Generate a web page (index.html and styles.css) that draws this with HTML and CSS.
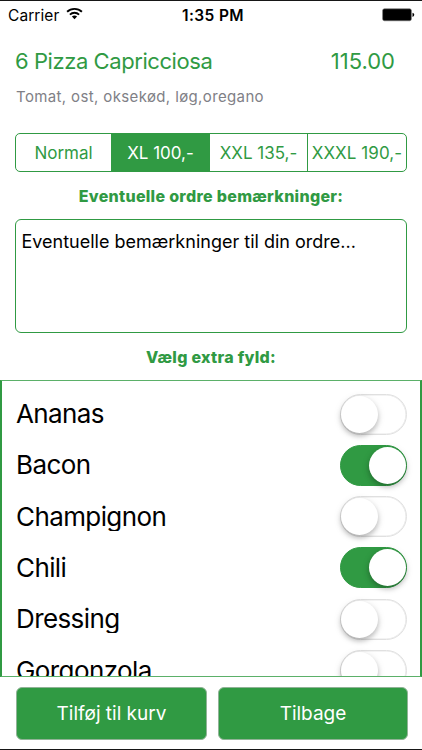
FILE: index.html
```html
<!DOCTYPE html>
<html lang="da">
<head>
<meta charset="utf-8">
<title>Pizza Capricciosa</title>
<link rel="stylesheet" href="styles.css">
</head>
<body>
<div class="screen">
  <header class="status">
    <div class="carrier"><span>Carrier</span>
      <svg class="wifi" width="17" height="13" viewBox="0 0 17 13" fill="none" stroke="#000" stroke-width="1.9"><path d="M1.1 4.8C5.2.9 11.8.9 15.9 4.8M3.9 7.6C6.5 5.2 10.5 5.2 13.1 7.6"/><path d="M5.9 9.6Q8.5 7.4 11.1 9.6L8.5 12.2Z" fill="#000" stroke="none"/></svg>
    </div>
    <span class="time">1:35 PM</span>
    <svg class="battery" width="33" height="14" viewBox="0 0 33 14"><rect x=".6" y=".8" width="28.8" height="12" rx="1.8" stroke="#777" stroke-width=".6"/><path d="M30.5 4.7Q32.3 5.2 32.3 6.8T30.5 8.9Z"/></svg>
  </header>
  <div class="heading"><h1>6 Pizza Capricciosa</h1><span class="price">115.00</span></div>
  <p class="ingredients">Tomat, ost, oksekød, løg,oregano</p>
  <div class="segments">
    <span class="segment">Normal</span><span class="segment selected">XL 100,-</span><span class="segment">XXL 135,-</span><span class="segment divided">XXXL 190,-</span>
  </div>
  <h2 class="label">Eventuelle ordre bemærkninger:</h2>
  <div class="remarks"><span>Eventuelle bemærkninger til din ordre...</span></div>
  <h2 class="label extras">Vælg extra fyld:</h2>
  <div class="list">
    <div class="row"><span class="name">Ananas</span><i class="switch"></i></div>
    <div class="row"><span class="name">Bacon</span><i class="switch on"></i></div>
    <div class="row"><span class="name">Champignon</span><i class="switch"></i></div>
    <div class="row"><span class="name">Chili</span><i class="switch on"></i></div>
    <div class="row"><span class="name">Dressing</span><i class="switch"></i></div>
    <div class="row"><span class="name">Gorgonzola</span><i class="switch"></i></div>
  </div>
  <footer class="actions"><span class="button">Tilføj til kurv</span><span class="button">Tilbage</span></footer>
</div>
</body>
</html>
```
FILE: styles.css
```css
* { box-sizing: border-box; }
body { margin: 0; background: #fff; font-family: Inter, "Liberation Sans", sans-serif; color: #000; }
h1, h2, p { margin: 0; font-weight: 400; }
.screen { --green: #309a43; width: 422px; height: 750px; overflow: hidden; display: flex; flex-direction: column; border-top: 1px solid #161616; border-bottom: 1px solid #161616; white-space: nowrap; }
.status { height: 28px; flex: none; padding: 0 8px; display: grid; grid-template-columns: 1fr auto 1fr; align-items: center; font-size: 15.5px; }
.carrier { display: flex; align-items: center; gap: 6.5px; letter-spacing: .07px; }
.wifi { margin-top: -2.5px; }
.time { font-weight: 600; font-size: 15.5px; letter-spacing: .4px; padding-left: 4px; }
.battery { justify-self: end; margin-right: -1px; margin-top: -1px; }
.heading { height: 62px; flex: none; padding: 1px 27px 0 15px; display: flex; justify-content: space-between; align-items: center; color: var(--green); font-size: 22px; }
.heading h1 { font-size: 22px; letter-spacing: -.43px; }
.ingredients { height: 42px; flex: none; padding: 0 16px; color: #808086; font-size: 15px; line-height: 12px; letter-spacing: .37px; }
.segments { height: 39px; flex: none; margin: 0 15px; display: grid; grid-template-columns: 95px 99px 97px 1fr; border: 1px solid var(--green); border-radius: 5px; overflow: hidden; color: var(--green); font-size: 17px; }
.segment { display: flex; align-items: center; justify-content: center; }
.selected { background: var(--green); color: #fff; }
.divided { border-left: 1px solid var(--green); letter-spacing: .08px; }
.label { height: 47px; flex: none; color: var(--green); text-align: center; font-size: 16px; font-weight: 800; line-height: 48px; letter-spacing: .3px; }
.remarks { height: 114px; flex: none; margin: 0 15px; border: 1px solid var(--green); border-radius: 6px; padding: 10px 5.5px; font-size: 18px; line-height: 24px; }
.extras { line-height: 48px; }
.list { height: 297px; flex: none; border: 1px solid #5bb069; border-left: 2px solid var(--green); border-right: 2px solid var(--green); overflow: hidden; padding: 7.4px 13px 0 14px; }
.row { height: 51.3px; display: flex; align-items: center; justify-content: space-between; }
.name { font-size: 26px; line-height: 29px; height: 29px; overflow: hidden; letter-spacing: -.6px; margin-top: -1px; }
.switch { width: 67px; height: 41px; border-radius: 21px; border: 1.5px solid #e0e0e0; box-shadow: inset 0 0 0 .6px #e8e8e8; flex: none; display: flex; align-items: center; }
.switch::before { content: ""; width: 37px; height: 37px; border-radius: 50%; background: #fff; box-shadow: 0 3px 5px rgba(0,0,0,.22), 0 2px 9px rgba(0,0,0,.1); }
.on { background: var(--green); border-color: var(--green); box-shadow: none; justify-content: flex-end; }
.on::before { margin-right: .5px; }
.actions { flex: 1; padding: 10px 14px 0 16px; display: grid; grid-template-columns: 191px 190px; gap: 11px; align-items: start; }
.button { height: 53px; display: flex; align-items: center; justify-content: center; color: #fff; background: var(--green); border: 1px solid #91b397; border-radius: 6px; font-size: 19px; }
```
